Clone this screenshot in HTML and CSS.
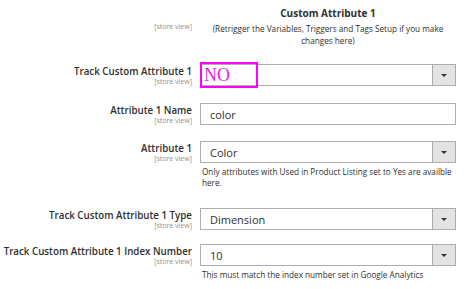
FILE: index.html
```html
<!DOCTYPE html>
<html>
<head>
<meta charset="utf-8">
<link rel="stylesheet" href="styles.css">
</head>
<body>
<div class="form">
  <div class="row header">
    <div class="label-col"><span class="scope">[store view]</span></div>
    <div class="value-col">
      <div class="title">Custom Attribute 1</div>
      <div class="desc">(Retrigger the Variables, Triggers and Tags Setup if you make changes here)</div>
    </div>
  </div>

  <div class="row r1">
    <div class="label-col"><div class="label">Track Custom Attribute 1</div><span class="scope">[store view]</span></div>
    <div class="value-col">
      <div class="control"><span class="val"></span><span class="arrow"></span></div>
      <div class="annot">NO</div>
    </div>
  </div>

  <div class="row r2">
    <div class="label-col"><div class="label">Attribute 1 Name</div><span class="scope">[store view]</span></div>
    <div class="value-col">
      <div class="control"><span class="val">color</span></div>
    </div>
  </div>

  <div class="row r3">
    <div class="label-col"><div class="label">Attribute 1</div><span class="scope">[store view]</span></div>
    <div class="value-col">
      <div class="control"><span class="val">Color</span><span class="arrow"></span></div>
      <div class="note">Only attributes with Used in Product Listing set to Yes are availble here.</div>
    </div>
  </div>

  <div class="row r4">
    <div class="label-col"><div class="label">Track Custom Attribute 1 Type</div><span class="scope">[store view]</span></div>
    <div class="value-col">
      <div class="control"><span class="val">Dimension</span><span class="arrow"></span></div>
    </div>
  </div>

  <div class="row r5">
    <div class="label-col"><div class="label">Track Custom Attribute 1 Index Number</div><span class="scope">[store view]</span></div>
    <div class="value-col">
      <div class="control"><span class="val">10</span><span class="arrow"></span></div>
      <div class="note">This must match the index number set in Google Analytics</div>
    </div>
  </div>
</div>
</body>
</html>
```
FILE: styles.css
```css
html, body {
  margin: 0;
  background: #fff;
}
body {
  font-family: "Open Sans", "DejaVu Sans", sans-serif;
  color: #303030;
}
.form {
  padding-top: 6px;
}
.row {
  display: grid;
  grid-template-columns: 192px 256px;
  column-gap: 8px;
}
.label-col {
  text-align: right;
  padding-top: 3px;
}
.label {
  font-size: 9.75px;
  font-weight: 600;
  line-height: 10px;
  white-space: nowrap;
}
.scope {
  display: block;
  font-size: 7px;
  line-height: 8px;
  margin-top: 1px;
  color: #929292;
}
.header .label-col {
  padding-top: 16px;
}
.value-col {
  position: relative;
}
.title {
  font-size: 10px;
  font-weight: 700;
  line-height: 14px;
  text-align: center;
}
.desc {
  font-size: 8.2px;
  line-height: 12px;
  text-align: center;
  margin-top: 3px;
}
.control {
  box-sizing: border-box;
  height: 22px;
  border: 1px solid #adadad;
  display: flex;
  align-items: center;
  background: #fff;
  font-size: 11px;
}
.val {
  flex: 1;
  padding-left: 9px;
}
.arrow {
  width: 22px;
  align-self: stretch;
  background: #e3e3e3;
  border-left: 1px solid #adadad;
  display: flex;
  align-items: center;
  justify-content: center;
}
.arrow::after {
  content: "";
  border-left: 3px solid transparent;
  border-right: 3px solid transparent;
  border-top: 3px solid #333;
}
.note {
  font-size: 8.2px;
  line-height: 11px;
  margin-top: 3px;
  padding-left: 2px;
}
.r1 { margin-top: 17px; }
.r2 { margin-top: 17px; }
.r3 { margin-top: 16px; }
.r4 { margin-top: 20px; }
.r5 { margin-top: 14px; }
.annot {
  position: absolute;
  left: 0;
  top: -2px;
  width: 58px;
  height: 26px;
  box-sizing: border-box;
  border: 2px solid #ff00ff;
  font-family: "Liberation Serif", serif;
  font-size: 18px;
  line-height: 22px;
  color: #f020e0;
  padding-left: 2px;
}
```
